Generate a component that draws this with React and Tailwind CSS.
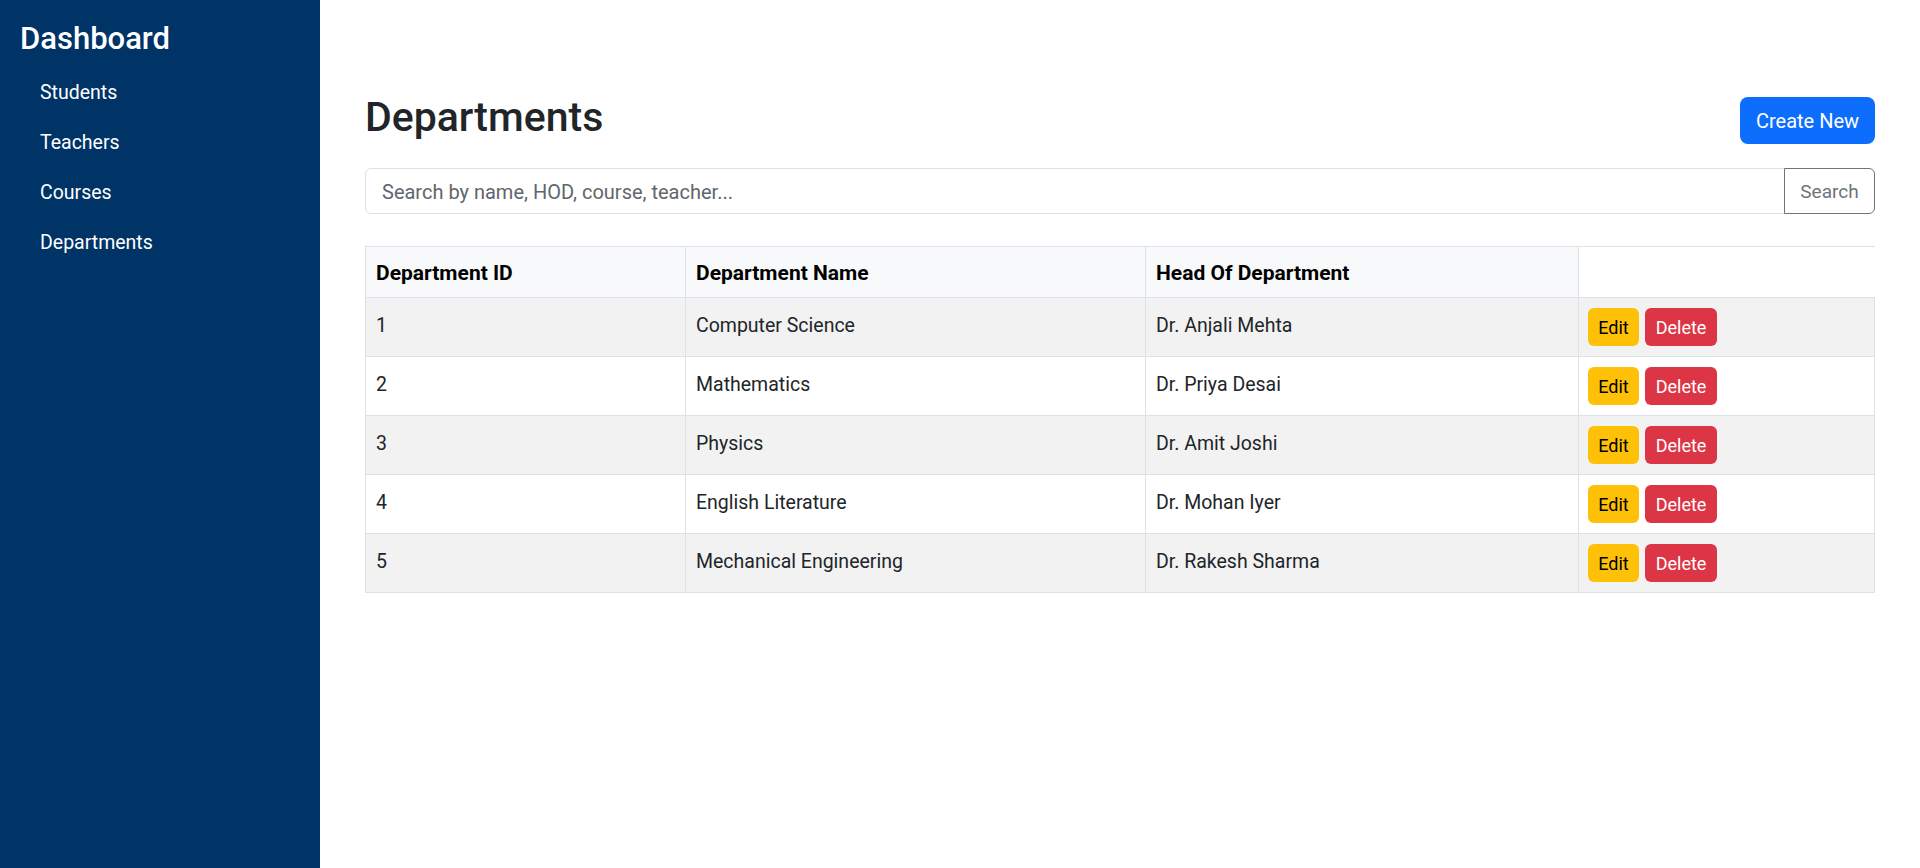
import React, { useState } from 'react';

const departments = [
	{ id: 1, name: "Computer Science", hod: "Dr. Anjali Mehta" },
	{ id: 2, name: "Mathematics", hod: "Dr. Priya Desai" },
	{ id: 3, name: "Physics", hod: "Dr. Amit Joshi" },
	{ id: 4, name: "English Literature", hod: "Dr. Mohan Iyer" },
	{ id: 5, name: "Mechanical Engineering", hod: "Dr. Rakesh Sharma" },
];

const navItems = ["Students", "Teachers", "Courses", "Departments"];

const Sidebar = () => {
	return (
		<aside className="w-[320px] shrink-0 min-h-screen bg-[#003366] text-white pt-[21px] px-5">
			<h2 className="text-[31px] leading-[36px] font-medium mb-[11px]">Dashboard</h2>
			<ul>
				{navItems.map((item) => (
					<li key={item}>
						<a href="#" className="block pl-5 py-[10px] text-[19.5px] leading-[30px] text-white">
							{item}
						</a>
					</li>
				))}
			</ul>
		</aside>
	);
}

const App = () => {
	const [query, setQuery] = useState("");

	return (
		<div className="flex min-h-screen bg-white font-['Roboto',sans-serif] text-[#212529]">
			<Sidebar />
			<main className="flex-1 pt-[93px] px-[45px]">
				<div className="flex justify-between items-start">
					<h1 className="text-[41px] leading-[48px] font-medium">Departments</h1>
					<button className="mt-[4px] h-[47px] w-[135px] rounded-lg bg-[#0d6efd] text-white text-[20px]">
						Create New
					</button>
				</div>

				<div className="flex mt-[24px] h-[46px]">
					<input
						type="text"
						value={query}
						onChange={(e) => setQuery(e.target.value)}
						placeholder="Search by name, HOD, course, teacher..."
						className="flex-1 h-full border border-[#dee2e6] rounded-l-md px-4 pt-[2px] text-[20px] placeholder:text-[#60666c] outline-none"
					/>
					<button className="w-[91px] h-full border border-[#6c757d] rounded-r-md pt-[2px] text-[#6c757d] text-[19px] -ml-px">
						Search
					</button>
				</div>

				<table className="w-full table-fixed mt-[32px] border-collapse">
					<colgroup>
						<col className="w-[320px]" />
						<col className="w-[460px]" />
						<col className="w-[433px]" />
						<col />
					</colgroup>
					<thead>
						<tr className="h-[51px]">
							<th className="border border-[#dee2e6] bg-[#f8f9fa] px-[10px] pt-[3px] text-left align-middle text-[21px] font-bold text-black">Department ID</th>
							<th className="border border-[#dee2e6] bg-[#f8f9fa] px-[10px] pt-[3px] text-left align-middle text-[21px] font-bold text-black">Department Name</th>
							<th className="border border-[#dee2e6] bg-[#f8f9fa] px-[10px] pt-[3px] text-left align-middle text-[21px] font-bold text-black">Head Of Department</th>
							<th className="border-t border-l border-b border-[#dee2e6] bg-white"></th>
						</tr>
					</thead>
					<tbody>
						{departments.map((d, i) => (
							<tr key={d.id} className={i % 2 === 0 ? "bg-[#f2f2f2]" : "bg-white"}>
								<td className="border border-[#dee2e6] px-[10px] pb-[3px] h-[59px] align-middle text-[19.5px]">{d.id}</td>
								<td className="border border-[#dee2e6] px-[10px] pb-[3px] h-[59px] align-middle text-[19.5px]">{d.name}</td>
								<td className="border border-[#dee2e6] px-[10px] pb-[3px] h-[59px] align-middle text-[19.5px]">{d.hod}</td>
								<td className="border border-[#dee2e6] px-[9px] h-[59px] align-middle">
									<div className="flex gap-[6px]">
										<button className="w-[51px] h-[38px] rounded-md bg-[#ffc107] text-black text-[18px]">Edit</button>
										<button className="w-[72px] h-[38px] rounded-md bg-[#dc3545] text-white text-[18px]">Delete</button>
									</div>
								</td>
							</tr>
						))}
					</tbody>
				</table>
			</main>
		</div>
	);
}

export default App;
